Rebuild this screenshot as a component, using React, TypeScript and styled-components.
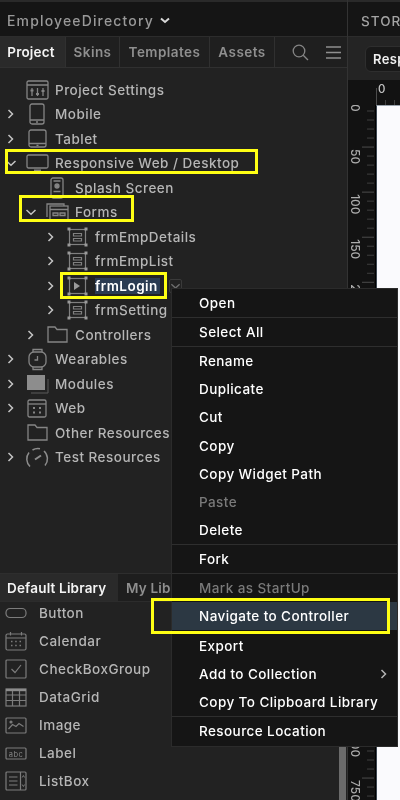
import React from 'react'
import styled, { createGlobalStyle, css } from 'styled-components'

const GlobalStyle = createGlobalStyle`
  html, body {
    margin: 0;
    padding: 0;
    background: #222;
  }
  body {
    font-family: Inter, "Liberation Sans", sans-serif;
  }
`

// the reference is an upscaled capture, text and icons are a bit soft
const soft = css`
  filter: blur(0.45px);
`

const TREE = [
  { label: 'Project Settings', depth: 0, icon: 'settings' },
  { label: 'Mobile', depth: 0, chevron: 'right', icon: 'mobile' },
  { label: 'Tablet', depth: 0, chevron: 'right', icon: 'tablet' },
  { label: 'Responsive Web / Desktop', depth: 0, chevron: 'down', icon: 'desktop', callout: { left: 5, top: -2, width: 253, height: 25 } },
  { label: 'Splash Screen', depth: 1, icon: 'splash' },
  { label: 'Forms', depth: 1, chevron: 'down', icon: 'forms', callout: { left: 19, top: -5, width: 115, height: 27 } },
  { label: 'frmEmpDetails', depth: 2, chevron: 'right', icon: 'form' },
  { label: 'frmEmpList', depth: 2, chevron: 'right', icon: 'form' },
  { label: 'frmLogin', depth: 2, chevron: 'right', icon: 'formPlay', selected: true, callout: { left: 60, top: -2, width: 107, height: 27 } },
  { label: 'frmSetting', depth: 2, chevron: 'right', icon: 'form' },
  { label: 'Controllers', depth: 1, chevron: 'right', icon: 'folder' },
  { label: 'Wearables', depth: 0, chevron: 'right', icon: 'watch' },
  { label: 'Modules', depth: 0, chevron: 'right', icon: 'modules' },
  { label: 'Web', depth: 0, chevron: 'right', icon: 'web' },
  { label: 'Other Resources', depth: 0, icon: 'folder' },
  { label: 'Test Resources', depth: 0, chevron: 'right', icon: 'gauge' },
]

const LIBRARY = [
  { label: 'Button', icon: 'button' },
  { label: 'Calendar', icon: 'calendar' },
  { label: 'CheckBoxGroup', icon: 'checkbox' },
  { label: 'DataGrid', icon: 'grid' },
  { label: 'Image', icon: 'image' },
  { label: 'Label', icon: 'label' },
  { label: 'ListBox', icon: 'listbox' },
]

const MENU = [
  [{ label: 'Open' }],
  [{ label: 'Select All' }],
  [
    { label: 'Rename' },
    { label: 'Duplicate' },
    { label: 'Cut' },
    { label: 'Copy' },
    { label: 'Copy Widget Path' },
    { label: 'Paste', disabled: true },
    { label: 'Delete' },
  ],
  [{ label: 'Fork' }],
  [
    { label: 'Mark as StartUp', disabled: true },
    { label: 'Navigate to Controller', active: true },
    { label: 'Export' },
    { label: 'Add to Collection', submenu: true },
    { label: 'Copy To Clipboard Library' },
  ],
  [{ label: 'Resource Location' }],
]

const Shell = styled.div`
  position: relative;
  display: grid;
  grid-template-columns: 348px 52px;
  width: 400px;
  height: 800px;
  overflow: hidden;
  background: #222;
`

const LeftPanel = styled.div`
  display: flex;
  flex-direction: column;
  height: 800px;
  border-right: 1px solid #333;
  box-sizing: content-box;
  width: 347px;
`

const TitleBar = styled.div`
  display: flex;
  align-items: center;
  gap: 6px;
  height: 37px;
  padding: 3px 0 0 7px;
  box-sizing: border-box;
  background: #151515;
  border-top: 2px solid #2a2a2a;
  border-bottom: 1px solid #2c2c2c;
  ${soft}
`

const ProjectName = styled.span`
  color: #999;
  font-size: 14px;
  font-weight: 500;
  letter-spacing: 1.15px;
`

const Tabs = styled.div`
  display: flex;
  align-items: stretch;
  height: 31px;
  background: #1f1f1f;
  border-bottom: 1px solid #303030;
  box-sizing: border-box;
`

const Tab = styled.div<{ $active?: boolean; $width: number }>`
  display: flex;
  align-items: center;
  justify-content: center;
  width: ${({ $width }) => $width}px;
  padding-right: ${({ $active }) => ($active ? 3 : 0)}px;
  color: ${({ $active }) => ($active ? '#f4f4f4' : '#8f8f8f')};
  background: ${({ $active }) => ($active ? '#2a2a2a' : '#1f1f1f')};
  border-right: 1px solid #303030;
  box-sizing: border-box;
  font-size: 13.5px;
  font-weight: 600;
  letter-spacing: ${({ $active }) => ($active ? '0.2px' : '0.45px')};
`

const TabText = styled.span`
  ${soft}
`

const TabTools = styled.div`
  display: flex;
  flex: 1;
  align-items: center;
  justify-content: space-between;
  padding: 0 6px 0 17px;
  ${soft}
`

const Tree = styled.div`
  display: flex;
  flex: 1;
  flex-direction: column;
  padding-top: 9.6px;
  background: #222;
`

const TreeRow = styled.div<{ $depth: number }>`
  position: relative;
  display: flex;
  align-items: center;
  height: 24.5px;
  flex: none;
  padding-left: ${({ $depth }) => $depth * 20}px;
`

const ChevronSlot = styled.span`
  display: flex;
  align-items: center;
  justify-content: center;
  width: 22px;
  flex: none;
  ${soft}
`

const IconSlot = styled.span<{ $width?: number }>`
  display: flex;
  align-items: center;
  justify-content: center;
  width: ${({ $width }) => $width ?? 30}px;
  flex: none;
  ${soft}
`

const TreeLabel = styled.span<{ $selected?: boolean }>`
  margin-left: 3px;
  padding-right: ${({ $selected }) => ($selected ? '2px' : '0')};
  color: ${({ $selected }) => ($selected ? '#fff' : '#b6b6b6')};
  background: ${({ $selected }) => ($selected ? '#2a3b52' : 'transparent')};
  font-size: 13.5px;
  font-weight: ${({ $selected }) => ($selected ? 600 : 500)};
  letter-spacing: 0.48px;
  white-space: nowrap;
  ${soft}
`

const RowDropdown = styled.span`
  display: flex;
  align-items: center;
  justify-content: center;
  width: 13px;
  height: 14px;
  margin-left: 9px;
  border: 1px solid #3a3a3a;
  border-radius: 2px;
  box-sizing: border-box;
`

const Callout = styled.span<{ $left: number; $top: number; $width: number; $height: number }>`
  position: absolute;
  left: ${({ $left }) => $left}px;
  top: ${({ $top }) => $top}px;
  width: ${({ $width }) => $width}px;
  height: ${({ $height }) => $height}px;
  border: 3px solid #ffff14;
  box-sizing: border-box;
  pointer-events: none;
`

const LibraryPanel = styled.div`
  position: relative;
  height: 227px;
  flex: none;
  overflow: hidden;
  background: #222;
`

const LibraryTabs = styled.div`
  position: relative;
  z-index: 1;
  display: flex;
  height: 29px;
  background: #1e1e1e;
  border-top: 1px solid #2e2e2e;
  border-bottom: 1px solid #2c2c2c;
  box-sizing: border-box;
`

const LibraryTab = styled.div<{ $active?: boolean; $width: number }>`
  display: flex;
  align-items: center;
  padding-left: ${({ $active }) => ($active ? 7 : 8)}px;
  width: ${({ $width }) => $width}px;
  color: ${({ $active }) => ($active ? '#f4f4f4' : '#8f8f8f')};
  background: ${({ $active }) => ($active ? '#2a2a2a' : '#1e1e1e')};
  box-sizing: border-box;
  font-size: 13.5px;
  font-weight: 600;
  letter-spacing: 0.18px;
  white-space: nowrap;
`

const LibraryList = styled.div`
  display: flex;
  flex-direction: column;
  margin-top: -3px;
`

const LibraryRow = styled.div`
  display: flex;
  align-items: center;
  height: 28px;
  flex: none;
  padding-left: 4px;
`

const LibraryLabel = styled.span`
  margin-left: 12px;
  color: #b6b6b6;
  font-size: 13.5px;
  font-weight: 500;
  letter-spacing: 0.48px;
  ${soft}
`

const ScrollThumb = styled.div`
  position: absolute;
  right: 1px;
  top: 30px;
  bottom: 0;
  width: 7px;
  background: #6b6b6b;
`

const RightPane = styled.div`
  display: flex;
  flex-direction: column;
  min-width: 0;
  overflow: hidden;
  background: #242424;
`

const StoryBar = styled.div`
  display: flex;
  align-items: center;
  height: 37px;
  flex: none;
  padding: 3px 0 0 13px;
  box-sizing: border-box;
  background: #151515;
  border-top: 2px solid #2a2a2a;
  border-bottom: 1px solid #2c2c2c;
  color: #a4a4a4;
  font-size: 13.5px;
  font-weight: 500;
  letter-spacing: 1px;
  white-space: nowrap;
`

const Toolbar = styled.div`
  display: flex;
  align-items: center;
  height: 43px;
  flex: none;
  padding-left: 17px;
  box-sizing: border-box;
`

const ModePicker = styled.div`
  height: 24px;
  padding: 0 40px 0 7px;
  line-height: 24px;
  background: #191919;
  border: 1px solid #2e2e2e;
  border-radius: 6px;
  color: #f0f0f0;
  font-size: 13px;
  font-weight: 600;
  letter-spacing: 0.4px;
  white-space: nowrap;
`

const CanvasArea = styled.div`
  display: grid;
  flex: 1;
  grid-template-columns: 28px 1fr;
  grid-template-rows: 25px 1fr;
  min-height: 0;
  background: #121212;
`

const Corner = styled.div`
  background: #121212;
`

const RulerSvg = styled.svg`
  display: block;
  background: #121212;
  ${soft}
`

const Canvas = styled.div`
  background: #fafafd;
  border-left: 1px solid #3c4650;
  border-top: 1px solid #9aa4ae;
`

const Menu = styled.div`
  position: absolute;
  left: 171px;
  top: 288px;
  z-index: 5;
  width: 227px;
  background: #151515;
  border: 1px solid #2b2b2b;
  box-sizing: border-box;
`

const MenuGroup = styled.div`
  & + & {
    border-top: 1px solid #2e2e2e;
  }
`

const MenuItem = styled.div<{ $disabled?: boolean; $active?: boolean }>`
  position: relative;
  display: flex;
  align-items: center;
  justify-content: space-between;
  height: 28.1px;
  margin-bottom: ${({ $active }) => ($active ? 2 : 0)}px;
  padding: 0 7px 0 27px;
  background: ${({ $active }) => ($active ? '#2c3843' : 'transparent')};
  color: ${({ $disabled }) => ($disabled ? '#7a7a7a' : '#fff')};
  font-size: 13.5px;
  font-weight: 500;
  letter-spacing: 0.42px;
  white-space: nowrap;
`

const MenuLabel = styled.span`
  display: flex;
  align-items: center;
  ${soft}
`

const Chevron = ({ dir, color = '#c4c4c4' }: { dir: string; color?: string }) => (
  <svg width="12" height="12" viewBox="0 0 12 12" fill="none" stroke={color} strokeWidth="1.5">
    <path d={dir === 'down' ? 'M1.5 4 L6 8.2 L10.5 4' : 'M3.5 2 L7.5 6 L3.5 10'} />
  </svg>
)

const TreeIcon = ({ name }: { name: string }) => {
  const stroke = '#858585'
  const common = { fill: 'none', stroke, strokeWidth: 1.3 }
  switch (name) {
    case 'settings':
      return (
        <svg width="23" height="20" viewBox="0 0 23 20" {...common}>
          <rect x="1" y="1" width="21" height="18" rx="1.5" />
          <path d="M1 5 H22 M6 8 V16 M11.500 8 V16 M17 8 V16" />
          <path d="M4.500 10.500 H7.500 M10 14 H13 M15.500 11 H18.500" strokeWidth="1.800" />
        </svg>
      )
    case 'mobile':
      return (
        <svg width="16" height="22" viewBox="0 0 16 22" {...common}>
          <rect x="1" y="1" width="14" height="20" rx="2" />
          <path d="M1 17 H15 M7 19 H9" />
        </svg>
      )
    case 'tablet':
      return (
        <svg width="19" height="19" viewBox="0 0 19 19" {...common}>
          <rect x="1" y="1" width="17" height="17" rx="2" />
          <path d="M1 14.500 H18 M8.500 16.300 H10.500" />
        </svg>
      )
    case 'desktop':
      return (
        <svg width="23" height="18" viewBox="0 0 23 18" {...common}>
          <rect x="1" y="1" width="21" height="13" rx="1.500" />
          <path d="M8 16.500 H15" strokeWidth="2" />
        </svg>
      )
    case 'splash':
      return (
        <svg width="14" height="22" viewBox="0 0 14 22" {...common}>
          <rect x="1" y="1" width="12" height="20" rx="2" />
          <circle cx="7" cy="9" r="2" fill={stroke} />
          <path d="M3.500 14.500 H10.500 M3.500 4 H10.500" />
        </svg>
      )
    case 'forms':
      return (
        <svg width="23" height="18" viewBox="0 0 23 18" {...common}>
          <path d="M1 14 V1 H18 V3" />
          <rect x="4" y="3" width="18" height="14" />
          <path d="M4 6.500 H22 M7 10 H12 V12.500 H7 Z M14 10 H19 V12.500 H14 Z" />
        </svg>
      )
    case 'form':
    case 'formPlay':
      return (
        <svg width="21" height="20" viewBox="0 0 21 20" fill="none" stroke="#808080" strokeWidth="1.200">
          <rect x="2.500" y="2.500" width="16" height="15" />
          <g fill="#9a9a9a" stroke="none">
            <rect x="0.500" y="0.500" width="3" height="3" />
            <rect x="17.500" y="0.500" width="3" height="3" />
            <rect x="0.500" y="16.500" width="3" height="3" />
            <rect x="17.500" y="16.500" width="3" height="3" />
          </g>
          {name === 'form' ? (
            <path d="M6.500 6.500 H14.500 V9 H6.500 Z M6.500 11.500 H14.500 V14 H6.500 Z" />
          ) : (
            <path d="M7 6 L13 10 L7 14 Z" fill="#9a9a9a" stroke="none" />
          )}
        </svg>
      )
    case 'folder':
      return (
        <svg width="21" height="17" viewBox="0 0 21 17" {...common}>
          <path d="M1 16 V1 H8 L10 3.500 H20 V16 Z" />
        </svg>
      )
    case 'watch':
      return (
        <svg width="19" height="23" viewBox="0 0 19 23" {...common}>
          <path d="M5 4 V1.500 H14 V4 M5 19 V21.500 H14 V19" />
          <rect x="1" y="4" width="17" height="15" rx="5" />
          <path d="M9.500 8 V12 H6.500" />
        </svg>
      )
    case 'modules':
      return (
        <svg width="23" height="20" viewBox="0 0 23 20" fill="none">
          <path d="M22 5 V19 H5" stroke="#5a5a5a" strokeWidth="1" />
          <rect x="1" y="1" width="18" height="15" fill="#8d8d8d" />
        </svg>
      )
    case 'web':
      return (
        <svg width="20" height="19" viewBox="0 0 20 19" {...common}>
          <rect x="1" y="1" width="18" height="17" rx="1.500" />
          <path d="M1 5 H19" />
          <path d="M6 9 H8 M12 9 H14 M6 13.500 H8 M12 13.500 H14" strokeWidth="2" />
        </svg>
      )
    case 'gauge':
      return (
        <svg width="24" height="21" viewBox="0 0 24 21" fill="none" stroke="#8c8c8c" strokeWidth="1.500">
          <path d="M5 19.500 A10.500 10.500 0 0 1 4 5.500 M7.500 3 A10.500 10.500 0 0 1 15 1.700 M19 4 A10.500 10.500 0 0 1 20 18.500" />
          <path d="M10 12.500 L16 8.500" strokeWidth="2" />
        </svg>
      )
    default:
      return null
  }
}

const LibraryIcon = ({ name }: { name: string }) => {
  const stroke = '#7c7c7c'
  const common = { fill: 'none', stroke, strokeWidth: 1.2 }
  switch (name) {
    case 'button':
      return (
        <svg width="22" height="12" viewBox="0 0 22 12" {...common}>
          <rect x="1" y="1.500" width="20" height="9" rx="4" />
        </svg>
      )
    case 'calendar':
      return (
        <svg width="22" height="20" viewBox="0 0 22 20" {...common}>
          <rect x="1" y="3" width="20" height="16" rx="1.500" />
          <path d="M1 7 H21 M5.500 1 V4.500 M16.500 1 V4.500" />
          <path d="M6 10.500 H7.500 M10.200 10.500 H11.700 M14.500 10.500 H16 M6 14.500 H7.500 M10.200 14.500 H11.700 M14.500 14.500 H16" strokeWidth="1.600" />
        </svg>
      )
    case 'checkbox':
      return (
        <svg width="22" height="20" viewBox="0 0 22 20" {...common}>
          <rect x="1" y="1" width="20" height="18" rx="1" />
          <path d="M6.500 10 L10 13.500 L16 6" />
        </svg>
      )
    case 'grid':
      return (
        <svg width="22" height="19" viewBox="0 0 22 19" {...common}>
          <rect x="1" y="1" width="20" height="17" />
          <path d="M1 2 H21" strokeWidth="2.400" stroke="#8c8c8c" />
          <path d="M1 7 H21 M1 12.500 H21 M7.500 3 V18 M14.500 3 V18" />
        </svg>
      )
    case 'image':
      return (
        <svg width="22" height="17" viewBox="0 0 22 17" {...common}>
          <rect x="1" y="1" width="20" height="15" rx="1" />
          <circle cx="6" cy="5" r="1" fill={stroke} />
          <path d="M3.500 12 L7.500 7.500 L11 9.500 L14 6.500 L18.500 9.500" />
        </svg>
      )
    case 'label':
      return (
        <svg width="22" height="13" viewBox="0 0 22 13" {...common}>
          <rect x="1" y="1" width="20" height="11" rx="1" />
          <text x="11" y="9.500" fill="#858585" stroke="none" fontSize="7.500" fontFamily="Inter, sans-serif" textAnchor="middle" letterSpacing="0.400">
            abc
          </text>
        </svg>
      )
    case 'listbox':
      return (
        <svg width="22" height="20" viewBox="0 0 22 20" {...common}>
          <rect x="1" y="1" width="20" height="18" rx="1" />
          <path d="M15.500 1 V19 M4 6 H12.500 M4 10 H12.500 M4 14 H12.500" />
          <path d="M17.200 6.500 L18.400 4.500 L19.600 6.500 M17.200 13.500 L18.400 15.500 L19.600 13.500" strokeWidth="1" />
        </svg>
      )
    default:
      return null
  }
}

const RULER_STEP = 45.07
const RULER_ORIGIN = -3

const VerticalRuler = () => {
  const ticks = []
  for (let i = 0; i <= 80; i++) {
    const y = RULER_ORIGIN + (i * RULER_STEP) / 5
    const major = i % 5 === 0
    ticks.push(
      <path
        key={i}
        d={`M${major ? 14 : 19} ${y} H26`}
        stroke={major ? '#4c4c4c' : '#3e3e3e'}
        strokeWidth="1"
      />,
    )
  }
  const labels = []
  for (let i = 0; i <= 15; i++) {
    const y = RULER_ORIGIN + i * RULER_STEP + 2
    labels.push(
      <text
        key={i}
        transform={`translate(3 ${y}) rotate(90)`}
        fill="#acacac"
        fontSize="12"
        fontWeight="500"
        fontFamily="Inter, sans-serif"
      >
        {i * 50}
      </text>,
    )
  }
  return (
    <RulerSvg width="28" height="695" viewBox="0 0 28 695">
      {ticks}
      {labels}
      <path d="M27.500 0 V695" stroke="#000" />
    </RulerSvg>
  )
}

const HorizontalRuler = () => (
  <RulerSvg width="24" height="25" viewBox="0 0 24 25">
    <path d="M0.500 8 V25" stroke="#4c4c4c" />
    <path d="M9.500 20 V25 M18.500 20 V25" stroke="#3e3e3e" />
    <text x="2" y="13" fill="#c4c4c4" fontSize="11.500" fontWeight="500" fontFamily="Inter, sans-serif">
      0
    </text>
  </RulerSvg>
)

const App = () => (
  <>
    <GlobalStyle />
    <Shell>
      <LeftPanel>
        <TitleBar>
          <ProjectName>EmployeeDirectory</ProjectName>
          <svg width="10" height="8" viewBox="0 0 10 8" fill="none" stroke="#d8d8d8" strokeWidth="2">
            <path d="M1 1.500 L5 5 L9 1.500" />
          </svg>
        </TitleBar>
        <Tabs>
          <Tab $active $width={66}><TabText>Project</TabText></Tab>
          <Tab $width={54}><TabText>Skins</TabText></Tab>
          <Tab $width={90}><TabText>Templates</TabText></Tab>
          <Tab $width={65}><TabText>Assets</TabText></Tab>
          <TabTools>
            <svg width="17" height="17" viewBox="0 0 17 17" fill="none" stroke="#858585" strokeWidth="1.300">
              <circle cx="7" cy="7" r="5.800" />
              <path d="M11.200 11.200 L16 16" />
            </svg>
            <svg width="15" height="13" viewBox="0 0 15 13" fill="none" stroke="#8f8f8f" strokeWidth="1.500">
              <path d="M0 1 H15 M0 6.500 H15 M0 12 H15" />
            </svg>
          </TabTools>
        </Tabs>
        <Tree>
          {TREE.map(({ callout, chevron, depth, icon, label, selected }) => (
            <TreeRow key={label + depth} $depth={depth}>
              <ChevronSlot>{chevron && <Chevron dir={chevron} />}</ChevronSlot>
              <IconSlot>
                <TreeIcon name={icon} />
              </IconSlot>
              <TreeLabel $selected={selected}>{label}</TreeLabel>
              {selected && (
                <RowDropdown>
                  <Chevron dir="down" color="#6d6d6d" />
                </RowDropdown>
              )}
              {callout && (
                <Callout
                  $left={callout.left}
                  $top={callout.top}
                  $width={callout.width}
                  $height={callout.height}
                />
              )}
            </TreeRow>
          ))}
        </Tree>
        <LibraryPanel>
          <LibraryTabs>
            <LibraryTab $active $width={118}><TabText>Default Library</TabText></LibraryTab>
            <LibraryTab $width={60}><TabText>My Library</TabText></LibraryTab>
          </LibraryTabs>
          <LibraryList>
            {LIBRARY.map(({ icon, label }) => (
              <LibraryRow key={label}>
                <IconSlot $width={23}>
                  <LibraryIcon name={icon} />
                </IconSlot>
                <LibraryLabel>{label}</LibraryLabel>
              </LibraryRow>
            ))}
          </LibraryList>
          <ScrollThumb />
        </LibraryPanel>
      </LeftPanel>
      <RightPane>
        <StoryBar><TabText>STORYBOARD</TabText></StoryBar>
        <Toolbar>
          <ModePicker><TabText>Responsive</TabText></ModePicker>
        </Toolbar>
        <CanvasArea>
          <Corner />
          <HorizontalRuler />
          <VerticalRuler />
          <Canvas />
        </CanvasArea>
      </RightPane>
      <Menu>
        {MENU.map((group, index) => (
          <MenuGroup key={index}>
            {group.map(({ active, disabled, label, submenu }) => (
              <MenuItem key={label} $active={active} $disabled={disabled}>
                <MenuLabel>{label}</MenuLabel>
                {submenu && (
                  <MenuLabel>
                    <Chevron dir="right" color="#b5b5b5" />
                  </MenuLabel>
                )}
                {active && <Callout $left={-21} $top={-4} $width={239} $height={36} />}
              </MenuItem>
            ))}
          </MenuGroup>
        ))}
      </Menu>
    </Shell>
  </>
)

export default App
